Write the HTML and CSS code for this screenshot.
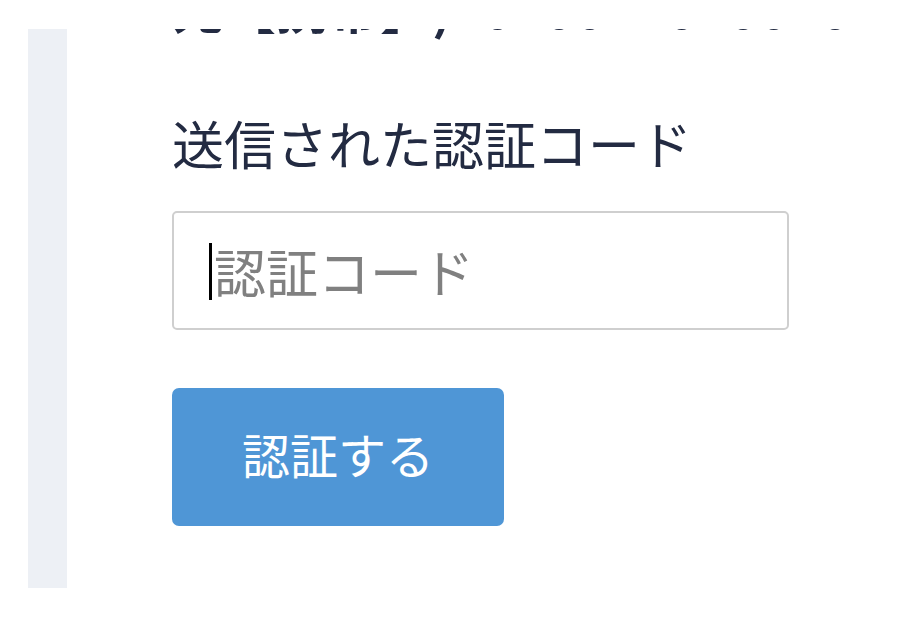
FILE: index.html
```html
<!DOCTYPE html>
<html lang="ja">
<head>
  <meta charset="UTF-8" />
  <meta name="viewport" content="width=device-width, initial-scale=1" />
  <title>認証コード</title>
  <link rel="stylesheet" href="styles.css">
</head>
<body>
  <div class="frame">
    <div class="rail"></div>
    <div class="main">
      <p class="sent-to">宛【携帯】)1010012010010</p>

      <label class="label" for="code">送信された認証コード</label>
      <div class="input-wrap">
        <input class="code-input" id="code" type="text" placeholder="認証コード" autofocus>
        <span class="caret"></span>
      </div>

      <button class="submit" type="button">認証する</button>
    </div>
  </div>
</body>
</html>
```

FILE: styles.css
```css
* {
  margin: 0;
  padding: 0;
  box-sizing: border-box;
}

body {
  background: #fff;
  font-family: "Noto Sans CJK JP", "Noto Sans", sans-serif;
  color: #232b42;
  height: 100vh;
  overflow: hidden;
}

.frame {
  display: flex;
  margin-top: 29px;
  height: 559px;
  overflow: hidden;
}

.rail {
  flex-shrink: 0;
  width: 39px;
  margin-left: 28px;
  background: #edf0f5;
}

.main {
  display: flex;
  flex-direction: column;
  align-items: flex-start;
  padding-left: 105px;
}

/* only the bottom of this line is still on screen */
.sent-to {
  margin-top: -53px;
  font-size: 52px;
  line-height: 62px;
  font-weight: 700;
  white-space: nowrap;
  text-spacing-trim: space-all;
}

.label {
  display: block;
  margin-top: 74px;
  font-size: 52px;
  line-height: 62px;
}

.input-wrap {
  position: relative;
  margin-top: 37px;
}

.code-input {
  display: block;
  width: 617px;
  height: 119px;
  padding: 0 30px 0 40px;
  border: 2px solid #cfcfcf;
  border-radius: 5px;
  font-family: inherit;
  font-size: 52px;
  color: #232b42;
  caret-color: transparent;
  outline: none;
}

.code-input::placeholder {
  color: #808080;
}

/* blinking text cursor, frozen in its visible state */
.caret {
  position: absolute;
  left: 37px;
  top: 32px;
  width: 3px;
  height: 57px;
  background: #000;
}

.submit {
  margin-top: 58px;
  width: 332px;
  height: 138px;
  padding-bottom: 8px;
  border: none;
  border-radius: 7px;
  background: #4f96d6;
  color: #fff;
  font-family: inherit;
  font-size: 48px;
  cursor: pointer;
}
```
